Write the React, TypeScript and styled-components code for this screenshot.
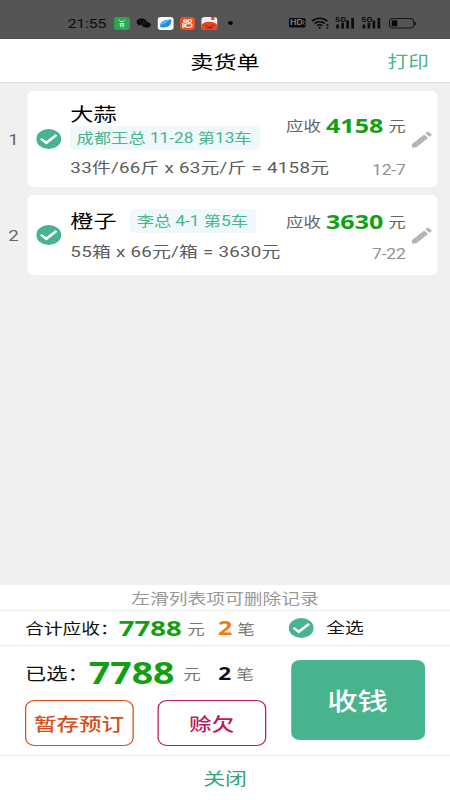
import React from "react";
import styled, { createGlobalStyle } from "styled-components";

const GlobalStyle = createGlobalStyle`
  html, body { margin: 0; padding: 0; background: #fff; overflow: hidden; }
  * { box-sizing: border-box; }
  button { font: inherit; padding: 0; margin: 0; background: none; border: 0; cursor: pointer; }
`;

const green = "#47b48e";

/* The phone renders a 360px wide layout widened to fill 450px. */
const Screen = styled.div`
  width: 360px;
  height: 800px;
  display: flex;
  flex-direction: column;
  transform: scaleX(1.25);
  transform-origin: 0 0;
  background: #fff;
  font-family: Roboto, "Noto Sans CJK SC", sans-serif;
  white-space: nowrap;
`;

const StatusBar = styled.div`
  height: 39px;
  flex: none;
  background: #555;
  border-bottom: 1px solid #4d4d4d;
  display: flex;
  align-items: center;
  justify-content: space-between;
  padding: 8px 27.5px 0 54px;
  color: #0c0c0c;
`;
const StatusGroup = styled.div<{ $gap: number }>`
  display: flex;
  align-items: center;
  gap: ${(p) => p.$gap}px;
  svg { display: block; }
`;
const Clock = styled.span`
  font-size: 13px;
  line-height: 16px;
  width: 31px;
  margin-right: 1px;
  margin-top: 1px;
  letter-spacing: -0.3px;
`;

const Header = styled.header`
  height: 44px;
  flex: none;
  display: grid;
  grid-template-columns: 1fr auto 1fr;
  align-items: center;
  border-bottom: 1px solid #dedede;
  padding: 4px 17px 0;
`;
const Title = styled.h1`
  margin: 0;
  grid-column: 2;
  font-size: 18.5px;
  line-height: 24px;
  font-weight: 400;
  color: #000;
`;
const PrintButton = styled.button`
  justify-self: end;
  font-size: 16.5px;
  line-height: 24px;
  color: ${green};
`;

const List = styled.main`
  flex: 1;
  background: #f0f0f0;
  padding-top: 8px;
  display: flex;
  flex-direction: column;
  gap: 8px;
`;
const Row = styled.div<{ $h: number }>`
  height: ${(p) => p.$h}px;
  display: flex;
  align-items: center;
  padding-right: 10.2px;
`;
const Index = styled.span`
  width: 21.8px;
  flex: none;
  text-align: center;
  font-size: 15px;
  line-height: 20px;
  padding-top: 1px;
  color: #666;
`;
const Card = styled.section`
  flex: 1;
  min-width: 0;
  height: 100%;
  background: #fff;
  border-radius: 5px;
  display: flex;
  align-items: center;
  padding: 0 2px 0 7px;
`;
/* The formula line may run underneath the amount column, so the width can shrink below its text. */
const Main = styled.div`
  flex: 1;
  min-width: 0;
  align-self: stretch;
  display: flex;
  flex-direction: column;
  margin-left: 7.5px;
  padding-top: 12px;
`;
const Heading = styled.div<{ $stack: boolean }>`
  display: flex;
  flex-direction: ${(p) => (p.$stack ? "column" : "row")};
  align-items: ${(p) => (p.$stack ? "flex-start" : "center")};
  gap: ${(p) => (p.$stack ? 0 : 11)}px;
  margin-top: ${(p) => (p.$stack ? 0 : 2)}px;
`;
const Product = styled.span`
  font-size: 18.5px;
  line-height: 23px;
  padding-top: 1px;
  height: 23px;
  color: #000;
`;
const Tag = styled.span`
  height: 24px;
  line-height: 25px;
  padding: 0 6.5px 0 5px;
  border-radius: 4px;
  background: #eff8fb;
  color: ${green};
  font-size: 13.8px;
`;
const Formula = styled.span<{ $top: number }>`
  margin-top: ${(p) => p.$top}px;
  font-size: 15px;
  line-height: 20px;
  color: #5c5c5c;
  letter-spacing: 0.21px;
`;
const Side = styled.div<{ $top: number; $gap: number }>`
  align-self: stretch;
  display: flex;
  flex-direction: column;
  align-items: flex-end;
  padding-top: ${(p) => p.$top}px;
  gap: ${(p) => p.$gap}px;
  margin-right: 2.2px;
`;
const Due = styled.div`
  display: flex;
  align-items: center;
  line-height: 24px;
  height: 24px;
  font-size: 14px;
  color: #666;
`;
const Amount = styled.strong<{ $size: number; $color?: string; $mx?: string }>`
  font-family: "Noto Sans", sans-serif;
  font-weight: 700;
  font-size: ${(p) => p.$size}px;
  color: ${(p) => p.$color ?? "#12a012"};
  margin: ${(p) => p.$mx ?? "0 4px"};
`;
const DateText = styled.span`
  font-size: 14px;
  line-height: 18px;
  letter-spacing: -0.1px;
  color: #929292;
`;
const Icon = styled.svg`
  display: block;
  flex: none;
`;

const Hint = styled.div`
  height: 26px;
  flex: none;
  border-bottom: 1px solid #eee;
  text-align: center;
  font-size: 15px;
  line-height: 28px;
  color: #999;
`;
const TotalRow = styled.div`
  height: 35px;
  flex: none;
  border-bottom: 1px solid #eee;
  display: flex;
  align-items: center;
  padding-left: 20px;
`;
const Sum = styled.div<{ $w: number; $h: number }>`
  display: flex;
  align-items: center;
  width: ${(p) => p.$w}px;
  height: ${(p) => p.$h}px;
  line-height: ${(p) => p.$h}px;
  color: #111;
`;
const Label = styled.span<{ $size: number; $w: number }>`
  font-size: ${(p) => p.$size}px;
  width: ${(p) => p.$w}px;
  padding-top: 2px;
`;
const Unit = styled.span`
  font-size: 14px;
  padding-top: 1px;
  color: #777;
`;
const SelectAll = styled.button`
  display: flex;
  align-items: center;
  gap: 10px;
  font-size: 15px;
  line-height: 24px;
  color: #111;
`;
const Footer = styled.div`
  height: 110px;
  flex: none;
  display: flex;
  border-bottom: 1px solid #eee;
  padding: 0 20px;
`;
const FooterLeft = styled.div`
  width: 213px;
  padding-top: 9px;
`;
const Actions = styled.div`
  display: flex;
  gap: 19.5px;
  margin-top: 9px;
`;
const Outline = styled.button<{ $color: string }>`
  width: 86.6px;
  height: 46px;
  border: 1px solid ${(p) => p.$color};
  border-radius: 8px;
  color: ${(p) => p.$color};
  font-size: 18px;
  font-weight: 500;
`;
const Collect = styled.button`
  width: 107.4px;
  height: 80px;
  margin-top: 14px;
  padding: 0 1px 2px 0;
  border-radius: 7px;
  background: ${green};
  color: #fff;
  font-size: 24.3px;
  font-weight: 500;
`;
const Close = styled.button`
  flex: none;
  height: 44px;
  padding-bottom: 1px;
  font-size: 17.5px;
  color: #35a37c;
`;

const Check = () => (
  <Icon width="20" height="20" viewBox="0 0 20 20">
    <circle cx="10" cy="10" r="10" fill={green} />
    <path d="M3.8 9.7 8 13.9 16.2 5.9" fill="none" stroke="#fff" strokeWidth="2.2" />
  </Icon>
);
const Pencil = () => (
  <Icon width="21" height="21" viewBox="0 0 24 24" fill="#b5b5b5">
    <path d="M3 17.25V21h3.75L17.81 9.94l-3.75-3.75L3 17.25zM20.71 7.04a1 1 0 0 0 0-1.41l-2.34-2.34a1 1 0 0 0-1.41 0l-1.83 1.83 3.75 3.75 1.83-1.83z" />
  </Icon>
);

const Signal = () => (
  <svg width="17" height="15" viewBox="0 0 17 15">
    <text x="0" y="5.6" fontSize="6.5" fontFamily="Inter" fontWeight="700" fill="#0c0c0c">5G</text>
    <g fill="#0c0c0c">
      <rect x="1" y="8.5" width="2.2" height="4" />
      <rect x="5" y="6.7" width="2.2" height="5.8" />
      <rect x="9" y="4.5" width="2.2" height="8" />
      <rect x="13" y="2" width="2.2" height="10.5" />
    </g>
  </svg>
);

const AppIcons = () => (
  <>
    <svg width="13" height="13" viewBox="0 0 13 13">
      <rect width="13" height="13" rx="3" fill="#2ca650" />
      <path d="M4 2.5 5.4 4.5h2.2L9 2.5" fill="none" stroke="#d9f3df" strokeWidth=".8" />
      <path d="M4.7 6.5h3.8M4.7 8.2h3.8M5.7 6v4.5M7.5 6v4.5" stroke="#d9f3df" strokeWidth=".8" />
    </svg>
    <svg width="12" height="12" viewBox="0 0 12 12">
      <path d="M4.3 1.5C1.9 1.5.2 3 .2 4.9c0 1.1.6 2 1.5 2.6l-.3 1.3 1.5-.8 1.4.2C6.6 8.2 8.3 6.8 8.3 4.9S6.6 1.5 4.3 1.5z" fill="#080808" />
      <path d="M8.2 4.7c-2 0-3.7 1.3-3.7 3s1.7 3 3.7 3l1.3-.2 1.2.7-.3-1.1c.8-.6 1.3-1.4 1.3-2.3 0-1.8-1.6-3.1-3.5-3.1z" fill="#080808" stroke="#555" strokeWidth=".4" />
      <g fill="#555"><circle cx="3" cy="4" r=".5" /><circle cx="5.6" cy="4" r=".5" /><circle cx="7" cy="7" r=".4" /><circle cx="9.3" cy="7" r=".4" /></g>
    </svg>
    <svg width="13" height="13" viewBox="0 0 13 13">
      <rect width="13" height="13" rx="3" fill="#fff" />
      <path d="M2.3 10.3C1.3 5.5 4.4 2.5 11 2.5 11.5 8 8.8 11.4 2.3 10.3z" fill="#248fea" />
      <path d="M2.4 8C3 4.5 5 3.1 9.6 2.8 7.5 5.2 5 7.2 2.4 8z" fill="#54b9f7" />
    </svg>
    <svg width="12" height="13" viewBox="0 0 12 13">
      <rect width="12" height="13" rx="3" fill="#f25022" />
      <g fill="none" stroke="#fff" strokeWidth="1.1">
        <circle cx="4.3" cy="4" r="1.3" /><circle cx="7.8" cy="4" r="1.5" />
        <rect x="4.3" y="6.7" width="5.2" height="3.6" rx="1.2" />
        <path d="M4.3 7.6 2.3 6.9v3l2-.6" />
      </g>
    </svg>
    <svg width="13" height="13" viewBox="0 0 13 13">
      <rect width="13" height="13" rx="3" fill="#f8eee9" />
      <path d="M0 8.2C1.5 3.6 10.5 3.4 13 8.2V10a3 3 0 0 1-3 3H3a3 3 0 0 1-3-3z" fill="#e24427" />
      <rect x="8" y="0" width="2.5" height="3" fill="#e24427" />
      <path d="M3.3 8.5h1M8.6 8.5h1M4.5 11l1.1-.8 1 .8 1-.8 1 .8" stroke="#461810" strokeWidth=".9" fill="none" />
    </svg>
    <svg width="13" height="12" viewBox="0 0 13 12"><circle cx="5.4" cy="6" r="2" fill="#080808" /></svg>
  </>
);

const items = [
  { name: "大蒜", tag: "成都王总 11-28 第13车", formula: "33件/66斤 x 63元/斤 = 4158元", due: "4158", date: "12-7", stack: true, h: 96 },
  { name: "橙子", tag: "李总 4-1 第5车", formula: "55箱 x 66元/箱 = 3630元", due: "3630", date: "7-22", stack: false, h: 80 },
];

export default function App() {
  return (
    <>
      <GlobalStyle />
      <Screen>
        <StatusBar>
          <StatusGroup $gap={5}>
            <Clock>21:55</Clock>
            <AppIcons />
          </StatusGroup>
          <StatusGroup $gap={4.2}>
            <svg width="14" height="10" viewBox="0 0 14 10">
              <rect width="13.5" height="9.5" rx="1.5" fill="#0c0c0c" />
              <text x="1" y="7.5" fontSize="7" fontFamily="Inter" fontWeight="700" fill="#777">HD</text>
              <path d="M11.5 2l1 2-1 1 1 2" stroke="#777" fill="none" strokeWidth=".7" />
            </svg>
            <svg width="15" height="12" viewBox="0 0 15 12">
              <g fill="none" stroke="#0c0c0c" strokeWidth="1.5">
                <path d="M.6 4.2C4 .4 9.4.4 12.8 4.2M2.6 6.5c2.4-2.5 5.8-2.5 8.2 0M4.6 8.7c1.3-1.3 2.9-1.3 4.2 0" />
              </g>
              <circle cx="6.7" cy="10.7" r="1" fill="#0c0c0c" />
              <path d="M13 7v2M13 10v1.5" stroke="#0c0c0c" strokeWidth="1.3" />
            </svg>
            <Signal />
            <Signal />
            <svg width="22" height="11" viewBox="0 0 22 11">
              <rect x=".5" y=".5" width="19.5" height="9.5" rx="3" fill="none" stroke="#151515" />
              <rect x="2.3" y="2.3" width="4.5" height="6" rx=".8" fill="#080808" />
              <path d="M21.2 4v3" stroke="#151515" />
            </svg>
          </StatusGroup>
        </StatusBar>
        <Header>
          <Title>卖货单</Title>
          <PrintButton>打印</PrintButton>
        </Header>
        <List>
          {items.map((it, i) => (
            <Row key={it.name} $h={it.h}>
              <Index>{i + 1}</Index>
              <Card>
                <Check />
                <Main>
                  <Heading $stack={it.stack}>
                    <Product>{it.name}</Product>
                    <Tag>{it.tag}</Tag>
                  </Heading>
                  <Formula $top={it.stack ? 8 : 9}>{it.formula}</Formula>
                </Main>
                <Side $top={it.stack ? 23 : 15} $gap={it.stack ? 23 : 11}>
                  <Due>
                    应收<Amount $size={20}>{it.due}</Amount>元
                  </Due>
                  <DateText>{it.date}</DateText>
                </Side>
                <Pencil />
              </Card>
            </Row>
          ))}
        </List>
        <Hint>左滑列表项可删除记录</Hint>
        <TotalRow>
          <Sum $w={211} $h={32}>
            <Label $size={15} $w={75}>合计应收：</Label>
            <Amount $size={22} $mx="-3px 4.5px 0 0">7788</Amount>
            <Unit>元</Unit>
            <Amount $size={20} $color="#f17b12" $mx="0 4px 0 10.5px">2</Amount>
            <Unit>笔</Unit>
          </Sum>
          <SelectAll>
            <Check />
            全选
          </SelectAll>
        </TotalRow>
        <Footer>
          <FooterLeft>
            <Sum $w={213} $h={36}>
              <Label $size={17} $w={51}>已选：</Label>
              <Amount $size={30} $mx="-1px 7px 0 0">7788</Amount>
              <Unit>元</Unit>
              <Amount $size={18} $color="#111" $mx="0 4px 0 14px">2</Amount>
              <Unit>笔</Unit>
            </Sum>
            <Actions>
              <Outline $color="#d5501c">暂存预订</Outline>
              <Outline $color="#c2185b">赊欠</Outline>
            </Actions>
          </FooterLeft>
          <Collect>收钱</Collect>
        </Footer>
        <Close>关闭</Close>
      </Screen>
    </>
  );
}
